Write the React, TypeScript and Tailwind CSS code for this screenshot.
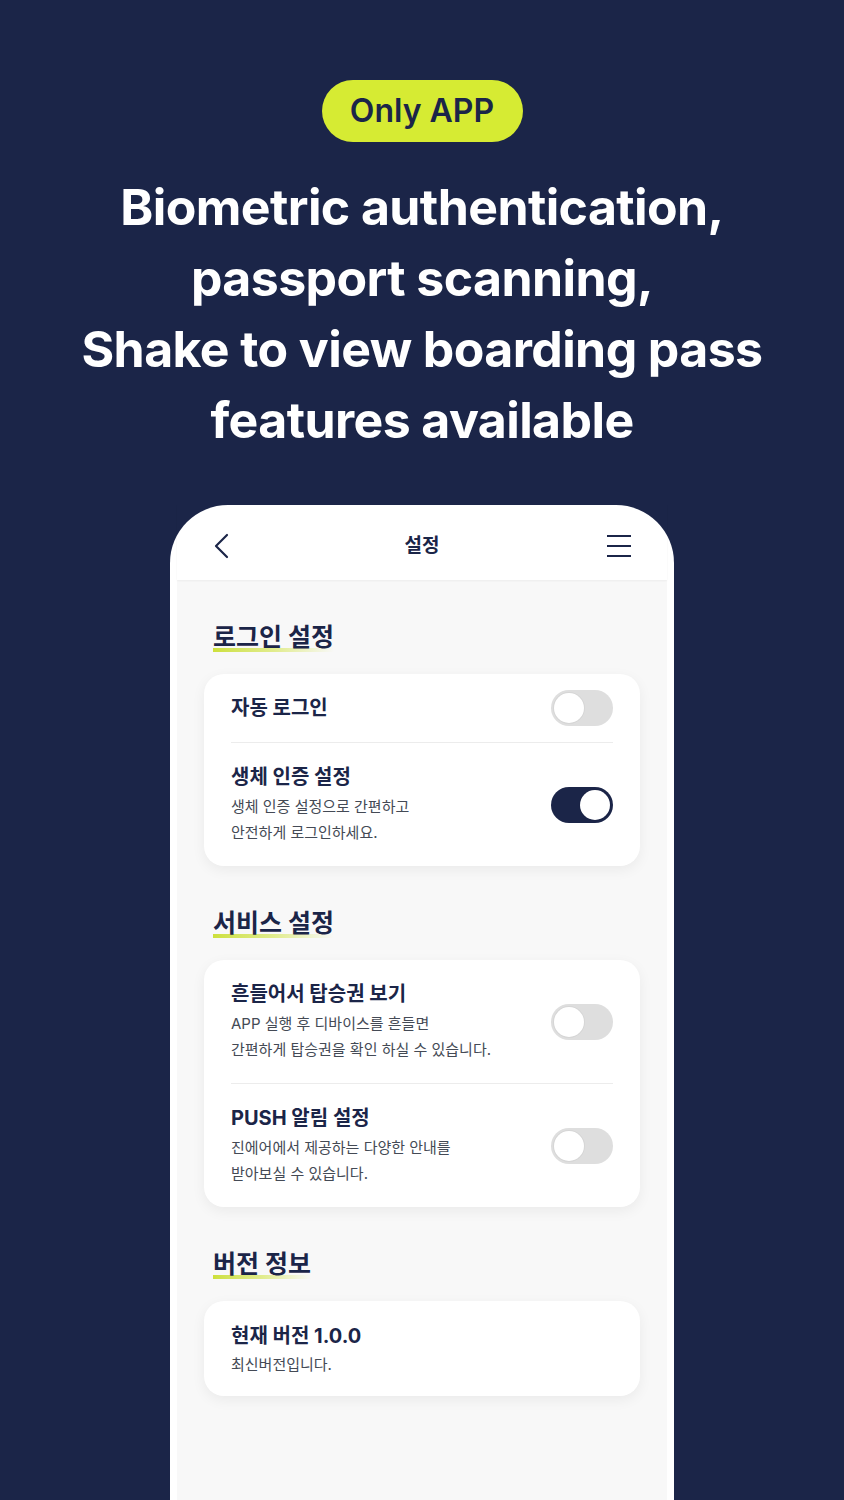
import { ReactNode } from "react";

const FONT = { fontFamily: "Inter, 'Noto Sans CJK KR', 'Noto Sans', sans-serif" };

function Toggle({ on = false }: { on?: boolean }) {
    return (
        <div
            className={
                "-my-3 flex h-[36px] w-[62px] shrink-0 items-center rounded-full px-[3px] " +
                (on ? "justify-end bg-[#1b2548]" : "justify-start bg-[#dedede]")
            }
        >
            <div className="h-[30px] w-[30px] rounded-full bg-white shadow-[0_0_0_1px_rgba(0,0,0,0.04)]" />
        </div>
    );
}

function SectionTitle({ children }: { children: ReactNode }) {
    return (
        <div className="mb-5 mt-10 pl-[36px]">
            <h2 className="relative inline-block text-[25px] font-bold leading-[34px] text-[#1b2548]">
                <span className="absolute bottom-[2px] left-0 h-[4px] w-full bg-gradient-to-r from-[#cde03a] via-[#e1ec8c] to-transparent" />
                <span className="relative">{children}</span>
            </h2>
        </div>
    );
}

function Row({
    title,
    desc,
    on,
    divider,
}: {
    title: string;
    desc?: string[];
    on?: boolean;
    divider?: boolean;
}) {
    return (
        <div className={"mx-[27px] flex items-center justify-between py-5 " + (divider ? "border-b border-[#ececec]" : "")}>
            <div>
                <div className="text-[20px] font-bold leading-[28px] text-[#1b2548]">{title}</div>
                {desc && (
                    <div className="mt-[3px] text-[15px] leading-[26px] text-[#444a55]">
                        {desc.map((d) => (
                            <div key={d}>{d}</div>
                        ))}
                    </div>
                )}
            </div>
            <Toggle on={on} />
        </div>
    );
}

function Card({ children }: { children: ReactNode }) {
    return (
        <div className="mx-[27px] rounded-[20px] bg-white shadow-[0_4px_14px_rgba(0,0,0,0.06)]">{children}</div>
    );
}

export default function App() {
    return (
        <div className="flex h-[1500px] flex-col items-center overflow-hidden bg-[#1b2548]" style={FONT}>
            <div className="mt-[80px] flex h-[62px] w-[201px] items-center justify-center rounded-full bg-[#d6eb33] text-[32px] font-semibold text-[#1b2548]">
                Only APP
            </div>

            <h1 className="mt-[30px] text-center text-[50px] font-bold leading-[71px] tracking-[-0.6px] text-white">
                Biometric authentication,
                <br />
                passport scanning,
                <br />
                Shake to view boarding pass
                <br />
                features available
            </h1>

            <div className="mt-[49px] flex w-[504px] flex-1 flex-col rounded-t-[58px] bg-white px-[7px]">
                <header className="relative flex h-[75px] items-center justify-between px-[36px] pt-[7px] shadow-[0_1px_2px_rgba(0,0,0,0.05)]">
                    <svg width="16" height="26" viewBox="0 0 16 26" fill="none">
                        <path d="M14 2 L3 13 L14 24" stroke="#1b2548" strokeWidth="2.2" strokeLinecap="round" strokeLinejoin="round" />
                    </svg>
                    <div className="absolute left-1/2 -translate-x-1/2 text-[19px] font-bold text-[#1b2548]">설정</div>
                    <svg width="24" height="24" viewBox="0 0 24 24" fill="none">
                        <path d="M0 2h24M0 12h24M0 22h24" stroke="#1b2548" strokeWidth="2.2" />
                    </svg>
                </header>

                <main className="flex-1 bg-[#f8f8f8] pb-10">
                    <SectionTitle>로그인 설정</SectionTitle>
                    <Card>
                        <Row title="자동 로그인" divider />
                        <Row title="생체 인증 설정" desc={["생체 인증 설정으로 간편하고", "안전하게 로그인하세요."]} on />
                    </Card>

                    <SectionTitle>서비스 설정</SectionTitle>
                    <Card>
                        <Row
                            title="흔들어서 탑승권 보기"
                            desc={["APP 실행 후 디바이스를 흔들면", "간편하게 탑승권을 확인 하실 수 있습니다."]}
                            divider
                        />
                        <Row title="PUSH 알림 설정" desc={["진에어에서 제공하는 다양한 안내를", "받아보실 수 있습니다."]} />
                    </Card>

                    <SectionTitle>버전 정보</SectionTitle>
                    <Card>
                        <div className="px-[27px] pb-[18px] pt-[21px]">
                            <div className="text-[20px] font-bold leading-[28px] text-[#1b2548]">현재 버전 1.0.0</div>
                            <div className="mt-[2px] text-[15px] leading-[26px] text-[#444a55]">최신버전입니다.</div>
                        </div>
                    </Card>
                </main>
            </div>
        </div>
    );
}
